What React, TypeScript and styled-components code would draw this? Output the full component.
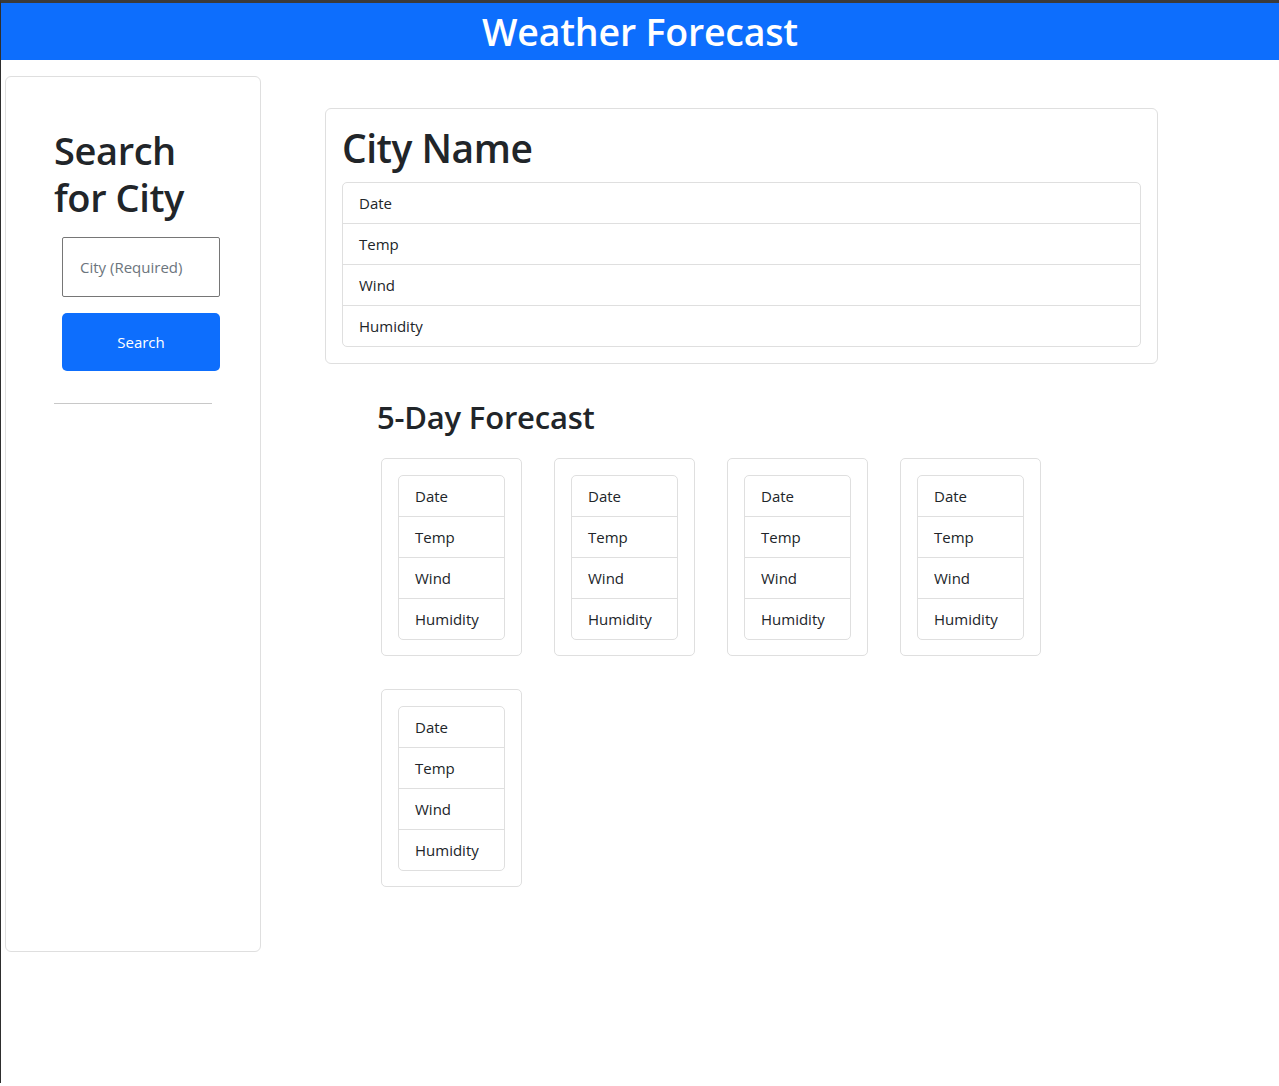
import React from "react";
import styled, { createGlobalStyle } from "styled-components";

const GlobalStyle = createGlobalStyle`
  html, body {
    margin: 0;
    padding: 0;
    background: #ffffff;
  }
  body {
    border-top: 3px solid #3a3a3a;
    border-left: 1px solid #2e2e2e;
    min-height: 1083px;
    box-sizing: border-box;
    font-family: "Open Sans", "Noto Sans", Arial, sans-serif;
    font-size: 15px;
    line-height: 24px;
    color: #212529;
  }
  * { box-sizing: border-box; }
`;

const Header = styled.header`
  height: 57px;
  background: #0d6efd;
  display: flex;
  align-items: center;
  justify-content: center;
`;

const Title = styled.h1`
  margin: 0;
  color: #ffffff;
  font-size: 37.5px;
  font-weight: 600;
  line-height: 44px;
  letter-spacing: -0.2px;
`;

const Layout = styled.div`
  display: flex;
  align-items: flex-start;
  padding: 16px 0 0 4px;
`;

const Sidebar = styled.aside`
  width: 256px;
  height: 876px;
  border: 1px solid #dfdfdf;
  border-radius: 6px;
  padding: 50px 0 0 48px;
`;

const SideInner = styled.div`
  width: 158px;
  display: flex;
  flex-direction: column;
`;

const SideHeading = styled.h2`
  margin: 0 0 16px 0;
  font-size: 38px;
  font-weight: 600;
  line-height: 47px;
  letter-spacing: -0.4px;
`;

const CityInput = styled.input`
  margin-left: 8px;
  width: 158px;
  height: 60px;
  border: 1px solid #767676;
  border-radius: 2px;
  padding: 0 0 0 17px;
  font-family: inherit;
  font-size: 15px;
  color: #212529;
  &::placeholder {
    color: #6c757d;
  }
`;

const SearchButton = styled.button`
  margin: 16px 0 0 8px;
  width: 158px;
  height: 58px;
  border: none;
  border-radius: 5px;
  background: #0d6efd;
  color: #ffffff;
  font-family: inherit;
  font-size: 15px;
  cursor: pointer;
`;

const Divider = styled.hr`
  margin: 32px 0 0 0;
  width: 158px;
  border: none;
  border-top: 1px solid #c8c8c8;
`;

const Main = styled.main`
  margin-left: 64px;
  padding-top: 32px;
  width: 833px;
`;

const CityCard = styled.section`
  border: 1px solid #dfdfdf;
  border-radius: 6px;
  padding: 14px 16px 16px 16px;
`;

const CityName = styled.h1`
  margin: 0 0 9px 0;
  font-size: 39px;
  font-weight: 600;
  line-height: 50px;
  letter-spacing: -0.5px;
`;

const ListGroup = styled.ul`
  list-style: none;
  margin: 0;
  padding: 0;
  border: 1px solid #dfdfdf;
  border-radius: 5px;
`;

const ListItem = styled.li`
  padding: 8px 16px;
  height: 40px;
  line-height: 24px;
  & + & {
    border-top: 1px solid #dfdfdf;
    height: 41px;
  }
`;

const ForecastSection = styled.section`
  padding: 34px 0 0 52px;
`;

const ForecastHeading = styled.h2`
  margin: 0 0 22px 0;
  font-size: 31px;
  font-weight: 600;
  line-height: 38px;
  letter-spacing: -0.2px;
`;

const CardGrid = styled.div`
  display: flex;
  flex-wrap: wrap;
  gap: 33px 32px;
  padding-left: 4px;
`;

const DayCard = styled.div`
  width: 141px;
  height: 198px;
  border: 1px solid #dfdfdf;
  border-radius: 5px;
  padding: 16px;
`;

const fields = ["Date", "Temp", "Wind", "Humidity"];

function InfoList() {
  return (
    <ListGroup>
      {fields.map((f) => (
        <ListItem key={f}>{f}</ListItem>
      ))}
    </ListGroup>
  );
}

export default function App() {
  return (
    <>
      <GlobalStyle />
      <Header>
        <Title>Weather Forecast</Title>
      </Header>
      <Layout>
        <Sidebar>
          <SideInner>
            <SideHeading>Search for City</SideHeading>
            <CityInput placeholder="City (Required)" />
            <SearchButton>Search</SearchButton>
            <Divider />
          </SideInner>
        </Sidebar>
        <Main>
          <CityCard>
            <CityName>City Name</CityName>
            <InfoList />
          </CityCard>
          <ForecastSection>
            <ForecastHeading>5-Day Forecast</ForecastHeading>
            <CardGrid>
              {[0, 1, 2, 3, 4].map((i) => (
                <DayCard key={i}>
                  <InfoList />
                </DayCard>
              ))}
            </CardGrid>
          </ForecastSection>
        </Main>
      </Layout>
    </>
  );
}
